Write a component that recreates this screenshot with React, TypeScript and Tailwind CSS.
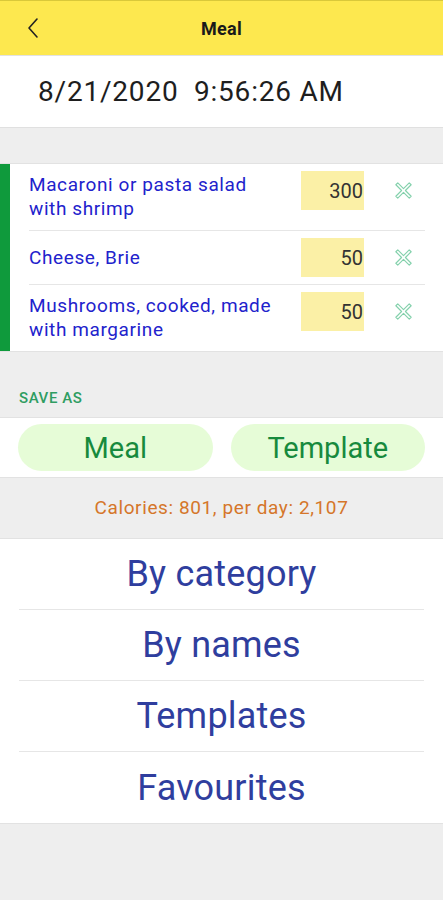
import React from "react";

const items = [
  { lines: ["Macaroni or pasta salad", "with shrimp"], qty: "300" },
  { lines: ["Cheese, Brie"], qty: "50" },
  { lines: ["Mushrooms, cooked, made", "with margarine"], qty: "50" },
];

function XIcon() {
  return (
    <svg width="21" height="21" viewBox="0 0 22 22" fill="none">
      <path
        d="M3 5 L5 3 L11 9 L17 3 L19 5 L13 11 L19 17 L17 19 L11 13 L5 19 L3 17 L9 11 Z"
        stroke="#84d1ac"
        strokeWidth="1.2"
        strokeLinejoin="round"
      />
    </svg>
  );
}

export default function App() {
  const font = { fontFamily: "Roboto, 'Noto Sans', sans-serif" };
  return (
    <div className="w-[443px] h-[900px] bg-[#eeeeee] flex flex-col" style={font}>
      {/* header */}
      <div className="h-[56px] bg-[#fde84f] border-t border-[#d9c83a] border-b border-b-[#e2e2e2] flex items-center relative">
        <div className="pl-[26px] w-[60px]">
          <svg width="14" height="22" viewBox="0 0 14 22" fill="none">
            <path d="M11 2 L3 11 L11 20" stroke="#222" strokeWidth="1.6" strokeLinecap="round" strokeLinejoin="round" />
          </svg>
        </div>
        <div className="flex-1 text-center text-[18px] font-bold text-[#1a1a1a] pr-[60px] tracking-[0.3px]">Meal</div>
      </div>

      {/* date */}
      <div className="h-[71px] bg-white flex items-center pl-[38px] text-[28px] tracking-[0.8px] text-[#1e1e1e] whitespace-pre">
        8/21/2020  9:56:26 AM
      </div>

      <div className="h-[36px] border-t border-[#e0e0e0]" />

      {/* items card */}
      <div className="bg-white border-t border-b border-[#e2e2e2] flex">
        <div className="w-[10px] bg-[#0f9a3c]" />
        <div className="flex-1 ml-[19px] mr-[18px] flex flex-col">
          {items.map((it, i) => (
            <div
              key={i}
              className={`flex pt-[7px] pb-[7px] ${i < items.length - 1 ? "border-b border-[#e6e6e6]" : ""}`}
            >
              <div className="flex-1 self-center text-[19px] tracking-[0.6px] leading-[24px] text-[#2222cc] py-[2px] pr-[10px] whitespace-nowrap">
                {it.lines.map((l) => (
                  <div key={l}>{l}</div>
                ))}
              </div>
              <div className="flex items-center self-start">
                <div className="w-[63px] h-[39px] bg-[#fbf0a6] flex items-center justify-end pr-[1px] text-[20px] text-[#333]">
                  {it.qty}
                </div>
                <div className="w-[61px] flex justify-start pl-[29px]">
                  <XIcon />
                </div>
              </div>
            </div>
          ))}
        </div>
      </div>

      {/* save as */}
      <div className="h-[65px] flex items-end pb-[8px] pl-[19px] text-[15px] font-medium text-[#2f9d62] tracking-[0.6px]">
        SAVE AS
      </div>
      <div className="bg-white border-t border-b border-[#e2e2e2] h-[61px] flex items-center gap-[18px] px-[18px]">
        <div className="flex-1 h-[47px] rounded-full bg-[#e6fcd7] flex items-center justify-center text-[29px] text-[#178a3d] pt-[3px]">
          Meal
        </div>
        <div className="flex-1 h-[47px] rounded-full bg-[#e6fcd7] flex items-center justify-center text-[29px] text-[#178a3d] pt-[3px]">
          Template
        </div>
      </div>

      {/* calories */}
      <div className="h-[60px] flex items-center justify-center text-[19px] tracking-[0.6px] text-[#d5762a]">
        Calories: 801, per day: 2,107
      </div>

      {/* menu */}
      <div className="bg-white border-t border-b border-[#e2e2e2] px-[19px]">
        {["By category", "By names", "Templates", "Favourites"].map((t, i, arr) => (
          <div
            key={t}
            className={`h-[71px] flex items-center justify-center text-[36px] tracking-[0.2px] text-[#2f3e9e] ${
              i < arr.length - 1 ? "border-b border-[#e6e6e6]" : ""
            }`}
          >
            {t}
          </div>
        ))}
      </div>
    </div>
  );
}
